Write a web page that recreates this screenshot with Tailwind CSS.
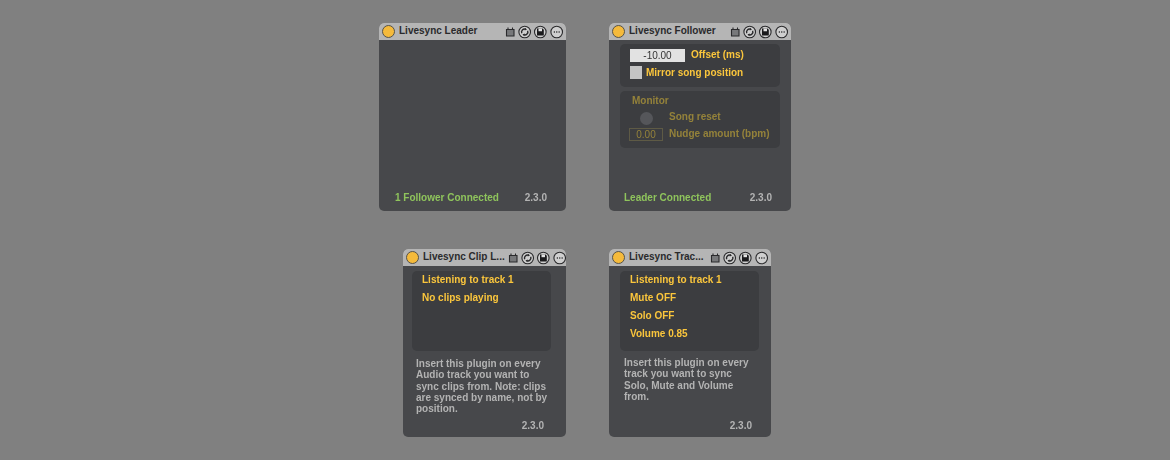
<!DOCTYPE html>
<html lang="en">
<head>
    <meta charset="UTF-8">
    <title>Livesync devices</title>
    <script src="https://cdn.jsdelivr.net/npm/@tailwindcss/browser@4"></script>
</head>
<body class="bg-[#808080] font-['Liberation_Sans',Arial,sans-serif] font-bold text-[10px] leading-[12px] overflow-hidden">
<svg class="hidden">
    <symbol id="title-icons" viewBox="0 0 62 16" fill="none" stroke="#2a2a2c">
        <!-- clip-view toggle -->
        <path d="M4.500 5.500h7.500v6.500h-7.500z" fill="#77787a" stroke-width="1.100"/>
        <path d="M6 3.500v2M10.500 3.500v2" stroke-width="1.100"/>
        <!-- sync -->
        <circle cx="22.700" cy="8" r="5.800" fill="#cfcfcf" stroke-width="1.100"/>
        <path d="M19.800 9.300a3 3 0 0 1 3.900-4M25.600 6.700a3 3 0 0 1-3.900 4" stroke-width="1.400"/>
        <path d="M23 3.800l2 1.700-2.300 1zM22.400 12.200l-2-1.700 2.300-1z" fill="#2a2a2c" stroke="none"/>
        <!-- save -->
        <circle cx="38.300" cy="8" r="5.800" fill="#cfcfcf" stroke-width="1.100"/>
        <path d="M35 4.500h5.500l1.300 1.300v5.700h-6.800z" fill="#1a1a1c" stroke="none"/>
        <path d="M36.500 4.500h3.500v2.700h-3.500z" fill="#e2e2e2" stroke="none"/>
        <!-- more -->
        <circle cx="54.700" cy="8" r="5.800" fill="#cfcfcf" stroke-width="1.100"/>
        <path d="M51.800 8h1.100M54.200 8h1.100M56.600 8h1.100" stroke-width="1.500"/>
    </symbol>
</svg>

<div class="h-[460px] pt-[23px] grid grid-cols-[566px_1fr] grid-rows-[188px_188px] gap-x-[43px] gap-y-[38px] blur-[0.35px]">

    <!-- Leader -->
    <section class="justify-self-end w-[187px] rounded-[5px] overflow-hidden bg-[#47484b] flex flex-col">
        <header class="h-[17px] shrink-0 bg-[#b5b5b5] flex items-center pl-[3px] pr-[2px]">
            <span class="w-[13px] h-[13px] rounded-full bg-[#f5ba3b] border border-[#55524a] shrink-0"></span>
            <span class="ml-[4px] flex-1 whitespace-nowrap text-[#2a2a2c] -mt-px">Livesync Leader</span>
            <svg class="shrink-0" width="62" height="16"><use href="#title-icons"/></svg>
        </header>
        <div class="flex-1 flex items-end justify-between pl-[16px] pr-[19px] pb-[7px]">
            <span class="text-[#8fc45c]">1 Follower Connected</span>
            <span class="text-[#b3b3b3]">2.3.0</span>
        </div>
    </section>

    <!-- Follower -->
    <section class="w-[182px] rounded-[5px] overflow-hidden bg-[#47484b] flex flex-col">
        <header class="h-[17px] shrink-0 bg-[#b5b5b5] flex items-center pl-[3px] pr-[2px]">
            <span class="w-[13px] h-[13px] rounded-full bg-[#f5ba3b] border border-[#55524a] shrink-0"></span>
            <span class="ml-[4px] flex-1 whitespace-nowrap text-[#2a2a2c] -mt-px">Livesync Follower</span>
            <svg class="shrink-0" width="62" height="16"><use href="#title-icons"/></svg>
        </header>
        <div class="flex-1 flex flex-col px-[11px] pt-[4px] pb-[7px]">
            <div class="h-[43px] rounded-[5px] bg-[#3c3d40] px-[10px] pt-[5px] flex flex-col gap-[4px] text-[#fbc63c]">
                <div class="flex items-start gap-[6px] h-[13px]">
                    <span class="w-[55px] h-[13px] bg-[#e2e2e2] text-[#333] font-normal text-center leading-[13px]">-10.00</span>
                    <span>Offset (ms)</span>
                </div>
                <div class="flex items-center gap-[4px]">
                    <span class="w-[12px] h-[13px] bg-[#c4c4c4]"></span>
                    <span>Mirror song position</span>
                </div>
            </div>
            <div class="mt-[4px] h-[57px] rounded-[5px] bg-[#3c3d40] pl-[9px] pt-[4px] text-[#94823a]">
                <div class="pl-[3px]">Monitor</div>
                <div class="mt-[4px] flex items-start h-[14px]">
                    <span class="w-[34px] flex justify-center pt-[1px]"><span class="w-[13px] h-[13px] rounded-full bg-[#55565a]"></span></span>
                    <span class="ml-[6px]">Song reset</span>
                </div>
                <div class="mt-[3px] flex items-start">
                    <span class="w-[34px] h-[13px] border border-[#5e5a45] font-normal text-center leading-[11px]">0.00</span>
                    <span class="ml-[6px]">Nudge amount (bpm)</span>
                </div>
            </div>
            <div class="mt-auto flex justify-between pl-[4px] pr-[8px]">
                <span class="text-[#8fc45c]">Leader Connected</span>
                <span class="text-[#b3b3b3]">2.3.0</span>
            </div>
        </div>
    </section>

    <!-- Clip -->
    <section class="justify-self-end w-[163px] rounded-[5px] overflow-hidden bg-[#47484b] flex flex-col">
        <header class="h-[17px] shrink-0 bg-[#b5b5b5] flex items-center pl-[3px] pr-[2px]">
            <span class="w-[13px] h-[13px] rounded-full bg-[#f5ba3b] border border-[#55524a] shrink-0"></span>
            <span class="ml-[4px] flex-1 whitespace-nowrap text-[#2a2a2c] -mt-px">Livesync Clip L...</span>
            <svg class="shrink-0" width="62" height="16"><use href="#title-icons"/></svg>
        </header>
        <div class="flex-1 flex flex-col px-[9px] pt-[5px] pb-[5px]">
            <div class="h-[80px] w-[139px] rounded-[5px] bg-[#3c3d40] pl-[10px] pt-[3px] flex flex-col gap-[6px] text-[#fbc63c]">
                <div>Listening to track 1</div>
                <div>No clips playing</div>
            </div>
            <p class="mt-[7px] ml-[4px] w-[134px] text-[#b3b3b3] leading-[11.25px]">Insert this plugin on every Audio track you want to sync clips from. Note: clips are synced by name, not by position.</p>
            <div class="mt-auto pr-[13px] text-right text-[#b3b3b3]">2.3.0</div>
        </div>
    </section>

    <!-- Track -->
    <section class="w-[162px] rounded-[5px] overflow-hidden bg-[#47484b] flex flex-col">
        <header class="h-[17px] shrink-0 bg-[#b5b5b5] flex items-center pl-[3px] pr-[2px]">
            <span class="w-[13px] h-[13px] rounded-full bg-[#f5ba3b] border border-[#55524a] shrink-0"></span>
            <span class="ml-[4px] flex-1 whitespace-nowrap text-[#2a2a2c] -mt-px">Livesync Trac...</span>
            <svg class="shrink-0" width="62" height="16"><use href="#title-icons"/></svg>
        </header>
        <div class="flex-1 flex flex-col px-[11px] pt-[5px] pb-[5px]">
            <div class="h-[80px] w-[139px] rounded-[5px] bg-[#3c3d40] pl-[10px] pt-[3px] flex flex-col gap-[6px] text-[#fbc63c]">
                <div>Listening to track 1</div>
                <div>Mute OFF</div>
                <div>Solo OFF</div>
                <div>Volume 0.85</div>
            </div>
            <p class="mt-[6px] ml-[4px] w-[134px] text-[#b3b3b3] leading-[11.25px]">Insert this plugin on every track you want to sync Solo, Mute and Volume from.</p>
            <div class="mt-auto pr-[8px] text-right text-[#b3b3b3]">2.3.0</div>
        </div>
    </section>
</div>
</body>
</html>
